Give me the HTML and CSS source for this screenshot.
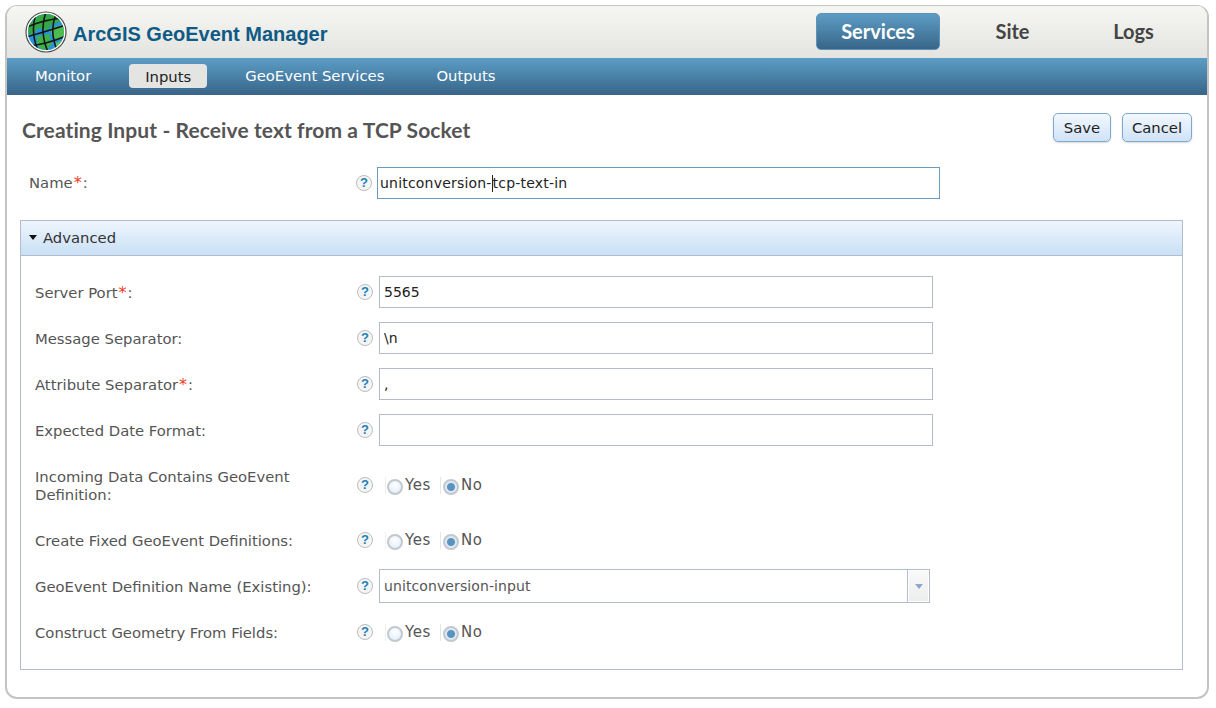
FILE: index.html
```html
<!DOCTYPE html>
<html lang="en">

<head>
  <meta charset="UTF-8" />
  <title>ArcGIS GeoEvent Manager</title>
  <link rel="stylesheet" href="styles.css">
</head>

<body>
  <div class="shell">
    <div class="header">
      <div class="brand">
        <svg class="globe" width="42" height="42" viewBox="0 0 42 42">
          <defs>
            <clipPath id="globeClip"><circle cx="21" cy="21" r="18" /></clipPath>
          </defs>
          <circle cx="21" cy="21" r="20" fill="#fff" stroke="#4a4a4a" stroke-width="1.2" />
          <g clip-path="url(#globeClip)">
            <rect width="42" height="42" fill="#2a92d8" />
            <path d="M3 14 L14 4 L28 2 L36 10 L26 14 L22 19 L13 17 L8 24 L2 22 Z" fill="#33a843" />
            <path d="M25 17 L40 13 L41 25 L32 29 L27 25 Z" fill="#4cbc4f" />
            <path d="M12 25 L24 23 L27 33 L19 41 L12 34 Z" fill="#3db04a" />
            <path d="M31 32 L38 29 L35 37 L29 39 Z" fill="#5fc252" />
            <g fill="none" stroke="#161616" stroke-width="1.6">
              <path d="M2 16 Q18 9 37 7" />
              <path d="M1 26 Q20 21 41 14" />
              <path d="M4 35 Q22 33 41 25" />
              <path d="M13 41 Q28 41 38 33" />
              <path d="M11 3 Q5 20 13 40" />
              <path d="M21 1 Q14 20 23 41" />
              <path d="M31 3 Q24 20 32 39" />
            </g>
          </g>
        </svg>
        <span class="brand-name">ArcGIS GeoEvent Manager</span>
      </div>
      <div class="top-nav">
        <a class="top-link active">Services</a>
        <a class="top-link">Site</a>
        <a class="top-link">Logs</a>
      </div>
    </div>

    <div class="sub-nav">
      <a class="sub-link link-monitor">Monitor</a>
      <a class="sub-link link-inputs active">Inputs</a>
      <a class="sub-link link-services">GeoEvent Services</a>
      <a class="sub-link">Outputs</a>
    </div>

    <div class="content">
      <div class="title-row">
        <h2>Creating Input - Receive text from a TCP Socket</h2>
        <div class="actions">
          <button class="btn-save">Save</button>
          <button class="btn-cancel">Cancel</button>
        </div>
      </div>

      <div class="name-row">
        <label>Name<span class="req">*</span>:</label>
        <span class="help">?</span>
        <div class="name-input">unitconversion-<span class="caret"></span>tcp-text-in</div>
      </div>

      <div class="panel">
        <div class="panel-head"><span class="arrow"></span>Advanced</div>
        <div class="panel-body">
          <div class="row">
            <label>Server Port<span class="req">*</span>:</label>
            <span class="help">?</span>
            <input type="text" value="5565" />
          </div>
          <div class="row">
            <label>Message Separator:</label>
            <span class="help">?</span>
            <input type="text" value="\n" />
          </div>
          <div class="row">
            <label>Attribute Separator<span class="req">*</span>:</label>
            <span class="help">?</span>
            <input type="text" value="," />
          </div>
          <div class="row">
            <label>Expected Date Format:</label>
            <span class="help">?</span>
            <input type="text" value="" />
          </div>
          <div class="row tall">
            <label>Incoming Data Contains GeoEvent Definition:</label>
            <span class="help">?</span>
            <div class="radios">
              <span class="sep"></span>
              <span class="radio"></span><span class="radio-text">Yes</span>
              <span class="sep"></span>
              <span class="radio on"></span><span class="radio-text">No</span>
            </div>
          </div>
          <div class="row">
            <label>Create Fixed GeoEvent Definitions:</label>
            <span class="help">?</span>
            <div class="radios">
              <span class="sep"></span>
              <span class="radio"></span><span class="radio-text">Yes</span>
              <span class="sep"></span>
              <span class="radio on"></span><span class="radio-text">No</span>
            </div>
          </div>
          <div class="row">
            <label>GeoEvent Definition Name (Existing):</label>
            <span class="help">?</span>
            <div class="select">
              <span class="select-value">unitconversion-input</span>
              <span class="select-btn"><span class="select-arrow"></span></span>
            </div>
          </div>
          <div class="row">
            <label>Construct Geometry From Fields:</label>
            <span class="help">?</span>
            <div class="radios">
              <span class="sep"></span>
              <span class="radio"></span><span class="radio-text">Yes</span>
              <span class="sep"></span>
              <span class="radio on"></span><span class="radio-text">No</span>
            </div>
          </div>
        </div>
      </div>
    </div>
  </div>
</body>

</html>
```

FILE: styles.css
```css
html,
body {
  margin: 0;
  background: #fff;
}

body {
  padding: 5px 7px 0 5px;
  font-family: "DejaVu Sans", sans-serif;
  font-size: 14.8px;
  color: #555;
}

.shell {
  height: 691px;
  border: 1px solid #c4c4c4;
  border-width: 1px 2px 2px 2px;
  border-radius: 12px;
  overflow: hidden;
}

.header {
  height: 52px;
  display: flex;
  justify-content: space-between;
  background: linear-gradient(#f6f6f2, #e3e3df);
}

.brand {
  display: flex;
  align-items: center;
  padding-left: 18px;
}

.globe {
  margin-top: -1px;
}

.brand-name {
  margin-left: 6px;
  margin-top: 4px;
  font-family: "Liberation Sans", sans-serif;
  font-weight: bold;
  font-size: 20px;
  color: #0f5a86;
}

.top-nav {
  display: flex;
  padding: 7px 13px 0 0;
}

.top-link {
  width: 121px;
  height: 37px;
  line-height: 37px;
  text-align: center;
  font-family: Lato, sans-serif;
  font-weight: bold;
  font-size: 20px;
  color: #444;
}

.top-link.active {
  width: 124px;
  margin-right: 12px;
  border: 1px solid #5c93b8;
  border-radius: 5px;
  box-sizing: border-box;
  line-height: 35px;
  background: linear-gradient(#5d9cc4, #386689);
  color: #fff;
}

.sub-nav {
  height: 37px;
  box-sizing: border-box;
  padding: 0 0 1px 28px;
  display: flex;
  align-items: center;
  background: linear-gradient(#5b9dc5, #386589);
}

.sub-link {
  margin-bottom: 1px;
  color: #fff;
}

.link-monitor {
  margin-right: 38px;
}

.link-inputs {
  margin-right: 38px;
}

.link-services {
  margin-right: 52px;
}

.sub-link.active {
  width: 78px;
  height: 24px;
  margin-bottom: 0;
  line-height: 26px;
  text-align: center;
  border-radius: 4px;
  background: #e4e4e2;
  color: #222;
}

.content {
  padding: 18px 15px 0 15px;
}

.title-row {
  display: flex;
  justify-content: space-between;
  height: 54px;
}

h2 {
  margin: 4px 0 0;
  font-family: Lato, sans-serif;
  font-weight: bold;
  font-size: 21px;
  letter-spacing: 0.1px;
  color: #555;
}

.actions {
  display: flex;
  gap: 11px;
}

button {
  height: 29px;
  padding: 0;
  border: 1px solid #7fa9cc;
  border-radius: 5px;
  background: linear-gradient(#f2f8fe, #cfe3f8);
  box-shadow: 0 1px 2px rgba(0, 0, 0, 0.15);
  font-family: "DejaVu Sans", sans-serif;
  font-size: 14.8px;
  color: #222;
}

.btn-save {
  width: 58px;
}

.btn-cancel {
  width: 70px;
}

.name-row {
  display: flex;
  align-items: center;
  height: 32px;
  padding-left: 7px;
}

.name-row label {
  width: 327px;
  margin-top: -1px;
}

.req {
  margin: 0 1px;
  font-size: 16px;
  line-height: 0;
  color: #f03a1e;
}

.help {
  flex: none;
  width: 14px;
  height: 14px;
  line-height: 14px;
  text-align: center;
  border: 1px solid #bbb;
  border-radius: 50%;
  background: #f4f4f4;
  box-shadow: inset 0 0 2px #fff;
  font-family: "Liberation Sans", sans-serif;
  font-weight: bold;
  font-size: 13px;
  color: #1f81b8;
}

.name-input {
  width: 559px;
  height: 30px;
  line-height: 30px;
  margin-left: 5px;
  padding-left: 2px;
  border: 1px solid #6b9cc0;
  font-size: 14px;
  letter-spacing: 0.2px;
  color: #222;
}

.caret {
  display: inline-block;
  width: 1px;
  height: 17px;
  vertical-align: -4px;
  background: #222;
}

.panel {
  margin: 21px 9px 0 -2px;
  height: 448px;
  border: 1px solid #b3bccd;
}

.panel-head {
  height: 35px;
  box-sizing: border-box;
  display: flex;
  align-items: center;
  padding: 0 0 1px 8px;
  border-bottom: 1px solid #b3bccd;
  background: linear-gradient(#eef5fd, #c9e0f6);
  color: #333;
}

.arrow {
  width: 0;
  height: 0;
  margin-right: 6px;
  border: 4.5px solid transparent;
  border-top: 5px solid #111;
  border-bottom: 0;
}

.panel-body {
  padding: 20px 0 0 14px;
}

.row {
  display: flex;
  align-items: center;
  height: 32px;
  margin-bottom: 14px;
}

.row.tall {
  height: 50px;
}

.row label {
  width: 322px;
  flex: none;
  margin-top: 1px;
  line-height: 18px;
}

.row input {
  width: 548px;
  height: 30px;
  margin-left: 6px;
  padding: 0 0 0 4px;
  border: 1px solid #b3bccd;
  outline: none;
  font-family: "DejaVu Sans", sans-serif;
  font-size: 14px;
  color: #222;
}

.radios {
  display: flex;
  align-items: center;
  margin-left: 12px;
}

.radio {
  width: 12px;
  height: 12px;
  margin-top: 4px;
  border: 2px solid #c2c8d0;
  border-radius: 50%;
  background: radial-gradient(circle at 50% 35%, #fff, #dcebf8);
}

.radio.on {
  background: radial-gradient(circle, #5b93c0 0 3.5px, #dfe9f2 4.5px);
}

.radio-text {
  margin-left: 2px;
  margin-top: -1px;
  font-size: 15px;
  letter-spacing: 0.6px;
}

.sep {
  width: 1px;
  height: 17px;
  margin: 0 2px 0 9px;
  background: #e6e6e6;
}

.radios .sep:first-child {
  margin: 0 1px 0 0;
  background: #f0f0f0;
}

.select {
  display: flex;
  width: 549px;
  height: 32px;
  margin-left: 6px;
  border: 1px solid #b3bccd;
  font-size: 14px;
  letter-spacing: 0.1px;
}

.select-value {
  flex: 1;
  line-height: 32px;
  padding-left: 4px;
}

.select-btn {
  width: 21px;
  display: flex;
  align-items: center;
  justify-content: center;
  border-left: 1px solid #b3bccd;
  box-shadow: inset 0 0 0 1px #fff;
  background: linear-gradient(#fafafa, #ececec);
}

.select-arrow {
  width: 0;
  height: 0;
  border: 4.5px solid transparent;
  border-top: 5px solid #8fa6cf;
  border-bottom: 0;
}
```
